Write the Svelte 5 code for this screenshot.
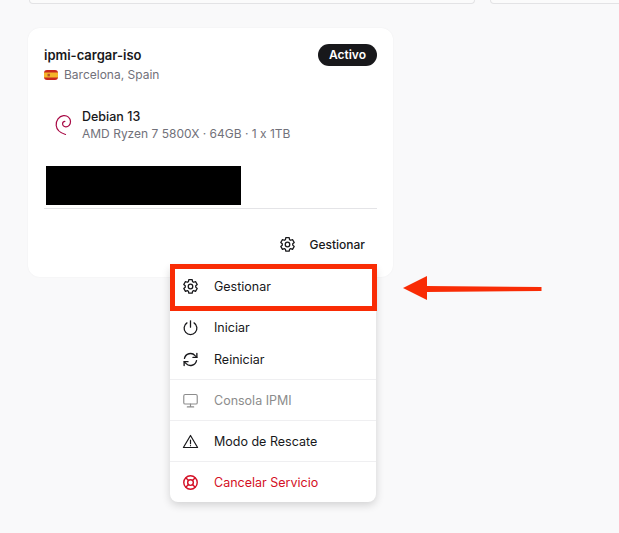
<script>
    const gear = "M9.6 2.4h4.8l.5 2.7 1.6.9 2.6-.9 2.4 4.1-2.1 1.8v1.9l2.1 1.8-2.4 4.1-2.6-.9-1.6.9-.5 2.7H9.6l-.5-2.7-1.6-.9-2.6.9-2.4-4.1L4.6 13V11L2.5 9.2l2.4-4.1 2.6.9 1.6-.9z"
</script>

<div class="page">
    <div class="top-row">
        <div class="stub"></div>
        <div class="stub"></div>
    </div>

    <div class="card">
        <div class="card-head">
            <div>
                <div class="name">ipmi-cargar-iso</div>
                <div class="location">
                    <svg class="flag" width="14" height="10" viewBox="0 0 14 10">
                        <rect width="14" height="10" rx="3" fill="#c8281e" />
                        <rect y="2.500" width="14" height="5" fill="#f4b52a" />
                        <rect x="3.500" y="3.800" width="2.400" height="2.600" fill="#b5532a" />
                    </svg>
                    Barcelona, Spain
                </div>
            </div>
            <span class="badge">Activo</span>
        </div>

        <div class="os">
            <svg class="debian" width="18" height="22" viewBox="0 0 18 22" fill="none" stroke="#a80a45" stroke-width="1.200" stroke-linecap="round">
                <path d="M11.500 20.500C6.500 19 2.600 15.500 2.200 11.500 1.800 6.500 5 2.200 9.500 1.700c4-.4 6.800 2.300 7 5.600.2 3.300-2.200 5.600-4.700 5.500-2-.1-3.300-1.500-3.200-3.200.1-1.400 1.100-2.300 2.300-2.300" />
            </svg>
            <div>
                <div class="os-name">Debian 13</div>
                <div class="os-spec">AMD Ryzen 7 5800X · 64GB · 1 x 1TB</div>
            </div>
        </div>

        <div class="redacted"></div>
        <div class="rule"></div>

        <div class="actions">
            <svg class="icon" viewBox="0 0 24 24" fill="none" stroke="#18181b" stroke-width="1.800" stroke-linejoin="round">
                <path d={gear} /><circle cx="12" cy="12" r="3.200" />
            </svg>
            <span>Gestionar</span>
        </div>
    </div>

    <div class="menu">
        <div class="item first">
            <svg class="icon" viewBox="0 0 24 24" fill="none" stroke="#18181b" stroke-width="1.800" stroke-linejoin="round">
                <path d={gear} /><circle cx="12" cy="12" r="3.200" />
            </svg>
            Gestionar
        </div>
        <div class="group">
            <div class="item tight">
                <svg class="icon" viewBox="0 0 24 24" fill="none" stroke="#18181b" stroke-width="1.800" stroke-linecap="round">
                    <path d="M12 2.500v9" /><path d="M7 5.500a9 9 0 1 0 10 0" />
                </svg>
                Iniciar
            </div>
            <div class="item tight">
                <svg class="icon" viewBox="0 0 24 24" fill="none" stroke="#18181b" stroke-width="1.900" stroke-linecap="round" stroke-linejoin="round">
                    <path d="M3.500 10.500A8.700 8.700 0 0 1 18.500 6.500L21 9" /><path d="M21 3.500V9h-5.500" />
                    <path d="M20.500 13.500A8.700 8.700 0 0 1 5.500 17.500L3 15" /><path d="M3 20.500V15h5.500" />
                </svg>
                Reiniciar
            </div>
        </div>
        <div class="item disabled line">
            <svg class="icon" viewBox="0 0 24 24" fill="none" stroke="#8c8c8c" stroke-width="1.600" stroke-linecap="round" stroke-linejoin="round">
                <rect x="2.500" y="3.500" width="19" height="13.500" rx="2" /><path d="M12 17v4M7.500 21h9" />
            </svg>
            Consola IPMI
        </div>
        <div class="item line">
            <svg class="icon" viewBox="0 0 24 24" fill="none" stroke="#18181b" stroke-width="1.700" stroke-linecap="round" stroke-linejoin="round">
                <path d="M12 3.500 22 20.500H2z" /><path d="M12 10v5M12 17.800v.1" />
            </svg>
            Modo de Rescate
        </div>
        <div class="item danger line">
            <svg class="icon" viewBox="0 0 24 24" fill="none" stroke="#d40f25" stroke-width="2">
                <circle cx="12" cy="12" r="9.500" /><circle cx="12" cy="12" r="4" />
                <path d="M5.300 5.300 9.200 9.200M18.700 5.300 14.800 9.200M5.300 18.700 9.200 14.800M18.700 18.700 14.800 14.800" />
            </svg>
            Cancelar Servicio
        </div>
    </div>

    <div class="highlight"></div>

    <svg class="arrow" width="142" height="26" viewBox="0 0 142 26">
        <path d="M24 10 139.500 11v4L24 16z" fill="#f92c05" />
        <path d="M1 12 25 0v24z" fill="#f92c05" />
    </svg>
</div>

<style>
    :global(body) {
        background: #f9f9fa;
        font-family: Inter, "Liberation Sans", sans-serif;
        font-feature-settings: "calt" 0;
    }
    .page {
        position: relative;
        width: 619px;
        height: 533px;
        overflow: hidden;
        color: #18181b;
    }
    .top-row {
        display: grid;
        grid-template-columns: 446px 200px;
        gap: 15px;
        margin-left: 29px;
        height: 4px;
        overflow: hidden;
    }
    .stub {
        height: 4px;
        box-sizing: border-box;
        background: #fbfbfb;
        border: 1px solid #e3e3e5;
        border-top: none;
        border-radius: 0 0 8px 8px;
    }
    .card {
        box-sizing: border-box;
        width: 365px;
        height: 249px;
        margin: 24px 0 0 28px;
        padding: 17px 16px 0;
        background: #fff;
        border-radius: 12px;
        box-shadow: 0 0 2px rgba(0, 0, 0, 0.05);
    }
    .card-head {
        display: flex;
        justify-content: space-between;
        align-items: flex-start;
    }
    .badge {
        margin-top: -1px;
        padding: 0 11px;
        height: 22px;
        line-height: 21px;
        border-radius: 11px;
        background: #18181b;
        color: #fff;
        font-size: 12px;
        font-weight: 600;
    }
    .name {
        font-size: 13px;
        line-height: 20px;
        font-weight: 600;
    }
    .location {
        display: flex;
        align-items: center;
        gap: 6px;
        font-size: 12px;
        line-height: 20px;
        color: #71717a;
    }
    .os {
        display: flex;
        align-items: center;
        gap: 10px;
        margin: 23px 0 0 10px;
    }
    .os-name {
        font-size: 12.500px;
        line-height: 17px;
        font-weight: 500;
    }
    .os-spec {
        font-size: 12px;
        line-height: 17px;
        color: #71717a;
    }
    .redacted {
        width: 195px;
        height: 39px;
        margin: 24px 0 0 2px;
        background: #000;
    }
    .rule {
        height: 1px;
        margin-top: 3px;
        background: #e4e4e7;
    }
    .actions {
        display: flex;
        justify-content: flex-end;
        align-items: center;
        gap: 13px;
        margin: 27px 12px 0 0;
        font-size: 12px;
        font-weight: 500;
    }
    .icon {
        width: 17px;
        height: 17px;
        flex: none;
    }
    .menu {
        position: absolute;
        left: 170px;
        top: 266px;
        width: 206px;
        background: #fff;
        border-radius: 0 0 8px 8px;
        box-shadow: 0 3px 8px rgba(0, 0, 0, 0.16);
        font-size: 12.500px;
    }
    .item {
        display: flex;
        align-items: center;
        gap: 15px;
        height: 41px;
        padding-left: 12px;
    }
    .group {
        padding: 4px 0;
    }
    .item.tight {
        height: 32px;
    }
    .line {
        border-top: 1px solid #efeff1;
        height: 40px;
    }
    .disabled {
        color: #8c8c8c;
    }
    .danger {
        color: #d40f25;
    }
    .highlight {
        position: absolute;
        left: 170px;
        top: 264px;
        width: 207px;
        height: 47px;
        box-sizing: border-box;
        border: 5px solid #f92c05;
    }
    .arrow {
        position: absolute;
        left: 402px;
        top: 276px;
    }
</style>
